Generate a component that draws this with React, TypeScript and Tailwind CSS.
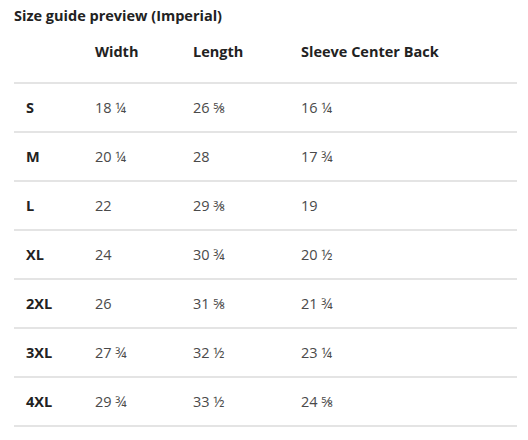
const rows: [string, string, string, string][] = [
  ["S", "18 ¼", "26 ⅝", "16 ¼"],
  ["M", "20 ¼", "28", "17 ¾"],
  ["L", "22", "29 ⅜", "19"],
  ["XL", "24", "30 ¾", "20 ½"],
  ["2XL", "26", "31 ⅝", "21 ¾"],
  ["3XL", "27 ¾", "32 ½", "23 ¼"],
  ["4XL", "29 ¾", "33 ½", "24 ⅝"],
];

const cols = "grid grid-cols-[69px_98px_108px_1fr]";

export default function App() {
  return (
    <div className="w-[528px] h-[440px] bg-white px-[14px] pt-[6px] font-['Open_Sans','Liberation_Sans',sans-serif] text-[14.5px]">
      <h2 className="text-[14.5px] leading-[20px] font-bold text-[#222]">
        Size guide preview (Imperial)
      </h2>
      <div className="w-[503px]">
        <div className={`${cols} h-[58px] items-center pb-[4px] border-b-2 border-[#e4e4e4] font-bold text-[#222]`}>
          <div className="pl-3"></div>
          <div className="pl-3">Width</div>
          <div className="pl-3">Length</div>
          <div className="pl-3">Sleeve Center Back</div>
        </div>
        {rows.map(([size, w, l, s]) => (
          <div
            key={size}
            className={`${cols} h-[49px] items-center border-b-2 border-[#e4e4e4] text-[#4a4a4a]`}
          >
            <div className="pl-3 font-bold text-[#222]">{size}</div>
            <div className="pl-3">{w}</div>
            <div className="pl-3">{l}</div>
            <div className="pl-3">{s}</div>
          </div>
        ))}
      </div>
    </div>
  );
}
